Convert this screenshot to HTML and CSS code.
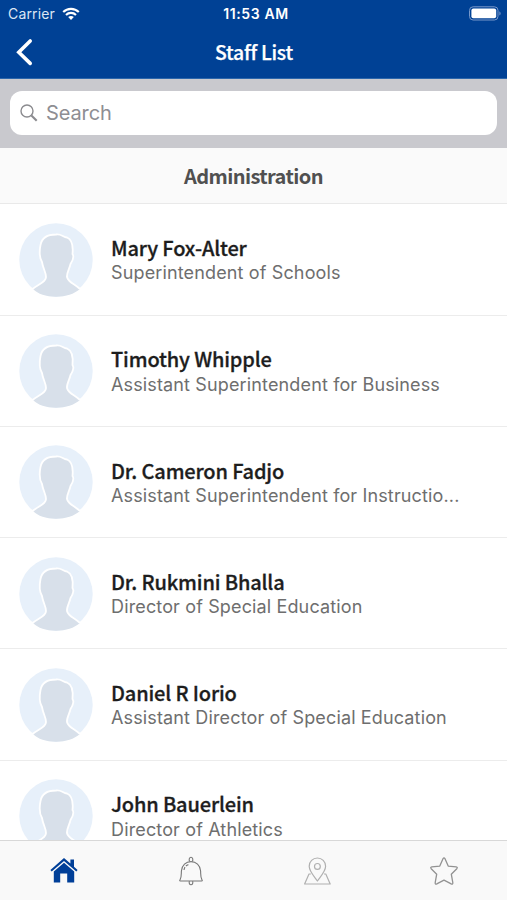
FILE: index.html
```html
<!DOCTYPE html>
<html lang="en">
<head>
  <meta charset="utf-8">
  <title>Staff List</title>
  <link rel="stylesheet" href="styles.css">
</head>
<body>
  <svg width="0" height="0" class="defs">
    <symbol id="avatar" viewBox="0 0 74 74">
      <circle cx="37" cy="37" r="36.7" fill="#e7f0fa"/>
      <path d="M14 66 C21 60 27 59 27 54 C27 49 24 46 23 39 C20 34 20.5 27 21.5 22 C23 14 30 11.5 37 11.5 C42 10.5 44 14 48 14.5 C54 17 54 26 53.5 31 C55.5 34 53.5 38 51.5 41 C50.5 46 47.5 50 48 54 C49 59 54 60 61 66 C55 71 47 73.7 37 73.7 C27 73.7 19 71 14 66 Z" fill="#d8e0ea"/>
      <path d="M13.5 66 C21 60 27 59 27 54 C27 49 24 46 23 39 C20 34 20.5 27 21.5 22 C23 14 30 11.5 37 11.5 C42 10.5 44 14 48 14.5 C54 17 54 26 53.5 31 C55.5 34 53.5 38 51.5 41 C50.5 46 47.5 50 48 54 C49 59 54 60 61 66" fill="none" stroke="#fff" stroke-width="1.8"/>
    </symbol>
  </svg>
  <div class="app">
    <header class="header">
      <div class="status">
        <div class="carrier">
          <span>Carrier</span>
          <svg width="18" height="14" viewBox="0 0 18 14" fill="none" stroke="#fff" stroke-width="2.1">
            <path d="M1.2 5.1 C5.5 .8 12.5 .8 16.8 5.1"/>
            <path d="M4 8 C6.8 5.2 11.2 5.2 14 8"/>
            <path d="M6.2 10.1 C7.8 8.7 10.2 8.7 11.8 10.1 L9 13 Z" fill="#fff" stroke="none"/>
          </svg>
        </div>
        <span class="time">11:53 AM</span>
        <svg class="battery" width="33" height="15" viewBox="0 0 33 15">
          <rect x="1.5" y=".8" width="28.5" height="13.2" rx="3.6" fill="none" stroke="#7898ca"/>
          <rect x="3.4" y="2.6" width="24.8" height="9.6" rx="2" fill="#fff"/>
          <path d="M31.4 5.2 C33 6 33 8.8 31.4 9.6 Z" fill="#7898ca"/>
        </svg>
      </div>
      <div class="navbar">
        <svg class="back" width="18" height="28" viewBox="0 0 18 28">
          <path d="M15.2 3 L3.8 14.2 L15.2 25.4" fill="none" stroke="#fff" stroke-width="3.6" stroke-linecap="round"/>
        </svg>
        <h1>Staff List</h1>
      </div>
    </header>

    <div class="searchbar">
      <div class="search">
        <svg width="18" height="18" viewBox="0 0 18 18" fill="none" stroke="#8b8b8f">
          <circle cx="7" cy="7" r="6" stroke-width="1.4"/>
          <path d="M11.4 11.4 L16.7 16.7" stroke-width="2.1"/>
        </svg>
        <span>Search</span>
      </div>
    </div>

    <h2 class="section">Administration</h2>

    <div class="list">
      <div class="row">
        <svg class="avatar"><use href="#avatar"/></svg>
        <div class="info">
          <div class="name">Mary Fox-Alter</div>
          <div class="role">Superintendent of Schools</div>
        </div>
      </div>
      <div class="row">
        <svg class="avatar"><use href="#avatar"/></svg>
        <div class="info">
          <div class="name">Timothy Whipple</div>
          <div class="role">Assistant Superintendent for Business</div>
        </div>
      </div>
      <div class="row">
        <svg class="avatar"><use href="#avatar"/></svg>
        <div class="info">
          <div class="name">Dr. Cameron Fadjo</div>
          <div class="role">Assistant Superintendent for Instructio...</div>
        </div>
      </div>
      <div class="row">
        <svg class="avatar"><use href="#avatar"/></svg>
        <div class="info">
          <div class="name">Dr. Rukmini Bhalla</div>
          <div class="role">Director of Special Education</div>
        </div>
      </div>
      <div class="row">
        <svg class="avatar"><use href="#avatar"/></svg>
        <div class="info">
          <div class="name">Daniel R Iorio</div>
          <div class="role">Assistant Director of Special Education</div>
        </div>
      </div>
      <div class="row">
        <svg class="avatar"><use href="#avatar"/></svg>
        <div class="info">
          <div class="name">John Bauerlein</div>
          <div class="role">Director of Athletics</div>
        </div>
      </div>
    </div>

    <nav class="tabs">
      <div class="tab">
        <svg width="30" height="30" viewBox="0 0 30 30" fill="#003f98">
          <path d="M16 2 L2.4 14 L3.7 15.6 L16 5 L28.3 15.6 L29.6 14 L26 10.8 V3.6 H22.4 V7.6 Z"/>
          <path d="M16 6.8 L5.8 15.6 V26.5 H12.2 V17.6 H19.2 V26.5 H26.2 V15.6 Z"/>
        </svg>
      </div>
      <div class="tab">
        <svg width="30" height="30" viewBox="0 0 30 30" fill="none" stroke="#777" stroke-width="1.1">
          <path d="M14.6 5.4 C13.6 3.8 14.4 1.2 16 1.2 C17.6 1.2 18.4 3.8 17.4 5.4"/>
          <path d="M5.4 25 H26.6 C27.6 25 27.4 24.2 26.9 23.6 C25.4 21.4 25.8 18 25.6 15 C25.2 9 21 5.6 16 5.6 C11 5.6 6.8 9 6.4 15 C6.2 18 6.6 21.4 5.1 23.6 C4.6 24.2 4.4 25 5.4 25 Z"/>
          <path d="M14.4 25.2 C13.8 27 14.5 28.8 16 28.8 C17.5 28.8 18.2 27 17.6 25.2"/>
          <path d="M9 14 C9.4 11.2 10.8 9.4 13.4 8.6" stroke-dasharray="3 1.5"/>
        </svg>
      </div>
      <div class="tab">
        <svg width="30" height="30" viewBox="0 0 30 30" fill="none" stroke="#b0b0b0" stroke-width="1.2" stroke-linejoin="round">
          <path d="M15.4 25 C12.4 20.5 7.2 15.4 7.2 10.2 C7.2 5.6 10.8 2 15.4 2 C20 2 23.6 5.6 23.6 10.2 C23.6 15.4 18.4 20.5 15.4 25 Z"/>
          <circle cx="15.4" cy="10.4" r="2.9"/>
          <path d="M8.8 18 H7 L2.6 28 H28.2 L23.8 18 H22"/>
        </svg>
      </div>
      <div class="tab">
        <svg width="30" height="30" viewBox="0 0 30 30" fill="none" stroke="#929292" stroke-width="1.3" stroke-linejoin="round">
          <path d="M14.1 2.6 Q15 1 15.9 2.6 L19.2 10.1 L27.2 10.9 Q29 11.3 27.8 12.7 L22.3 18.2 L23.8 26.6 Q24 28.6 22.2 27.8 L15 24.2 L7.8 27.8 Q6 28.6 6.2 26.6 L7.7 18.2 L2.2 12.7 Q1 11.3 2.8 10.9 L10.8 10.1 Z"/>
        </svg>
      </div>
    </nav>
  </div>
</body>
</html>
```
FILE: styles.css
```css
* {
  box-sizing: border-box;
}
body {
  margin: 0;
  background-color: #fff;
  font-family: Inter, sans-serif;
}
h1, h2 {
  margin: 0;
}
.defs {
  display: none;
}
.app {
  display: flex;
  flex-direction: column;
  height: 900px;
  overflow: hidden;
}
.header {
  height: 79px;
  flex: none;
  background-color: #004195;
  border-bottom: 1px solid #2c66ab;
  color: #fff;
}
.status {
  display: grid;
  grid-template-columns: 1fr auto 1fr;
  align-items: center;
  height: 27px;
  padding: 0 6px 0 8px;
}
.carrier {
  display: flex;
  align-items: center;
  gap: 7px;
  font-size: 14px;
  letter-spacing: 0.15px;
  color: #dce6f4;
}
.time {
  padding-left: 3px;
  font-size: 14px;
  font-weight: 600;
  letter-spacing: 0.6px;
}
.battery {
  justify-self: end;
}
.navbar {
  display: grid;
  grid-template-columns: 1fr auto 1fr;
  align-items: center;
  height: 50px;
  padding: 0 14px 0 15px;
}
.navbar h1 {
  font-family: "Noto Sans CJK SC", sans-serif;
  font-size: 19.4px;
  font-weight: 500;
  letter-spacing: -0.25px;
  line-height: 28px;
  -webkit-text-stroke: 0.25px #fff;
}
.searchbar {
  flex: none;
  height: 69px;
  padding: 12px 10px 13px;
  background-color: #c9c9ce;
}
.search {
  display: flex;
  align-items: center;
  gap: 8px;
  height: 44px;
  padding-left: 10px;
  border-radius: 12px;
  background-color: #fff;
  color: #8e8e93;
  font-size: 20px;
  letter-spacing: -0.1px;
}
.section {
  flex: none;
  height: 56px;
  border-bottom: 1px solid #e9e9e9;
  background-color: #fafafa;
  color: #505050;
  font-family: "Noto Sans CJK SC", sans-serif;
  font-size: 20px;
  font-weight: 700;
  letter-spacing: -0.6px;
  line-height: 55px;
  text-align: center;
}
.list {
  flex: 1;
  min-height: 0;
  overflow: hidden;
}
.row {
  display: flex;
  align-items: center;
  gap: 18px;
  height: 111.2px;
  padding: 0.6px 0 0 19px;
  border-bottom: 1px solid #ececec;
}
.row:first-child {
  height: 111.8px;
}
.avatar {
  flex: none;
  width: 74px;
  height: 74px;
}
.info {
  padding-top: 1px;
}
.name {
  color: #1d1d1d;
  font-family: "Noto Sans CJK SC", sans-serif;
  font-size: 20px;
  font-weight: 500;
  letter-spacing: -0.15px;
  line-height: 25px;
  -webkit-text-stroke: 0.3px #1d1d1d;
}
.role {
  margin-top: 1.4px;
  color: #6e6e6e;
  font-size: 18px;
  line-height: 24px;
  letter-spacing: 0.14px;
  white-space: nowrap;
}
.tabs {
  display: flex;
  flex: none;
  height: 60px;
  border-top: 1px solid #d8d8d8;
  background-color: #f9f9f9;
}
.tab {
  display: flex;
  flex: 1;
  align-items: center;
  justify-content: center;
}
```
